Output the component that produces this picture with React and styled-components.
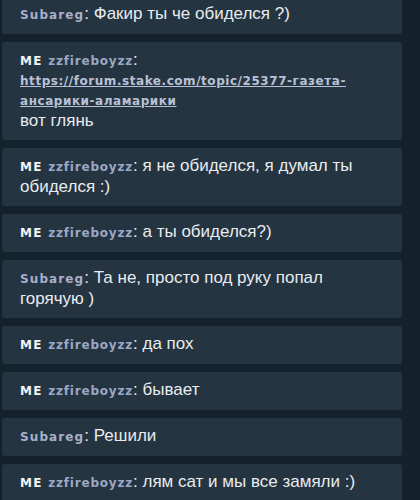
import React from 'react'
import styled, { createGlobalStyle } from 'styled-components'

const messages = [
  { id: 1, me: false, user: 'Subareg', text: 'Факир ты че обиделся ?)' },
  { id: 2, me: true, user: 'zzfireboyzz', link: 'https://forum.stake.com/topic/25377-газета-ансарики-аламарики', text: 'вот глянь' },
  { id: 3, me: true, user: 'zzfireboyzz', text: 'я не обиделся, я думал ты обиделся :)' },
  { id: 4, me: true, user: 'zzfireboyzz', text: 'а ты обиделся?)' },
  { id: 5, me: false, user: 'Subareg', text: 'Та не, просто под руку попал горячую )' },
  { id: 6, me: true, user: 'zzfireboyzz', text: 'да пох' },
  { id: 7, me: true, user: 'zzfireboyzz', text: 'бывает' },
  { id: 8, me: false, user: 'Subareg', text: 'Решили' },
  { id: 9, me: true, user: 'zzfireboyzz', text: 'лям сат и мы все замяли :)' },
]

const App = () => {
  return (
    <>
      <Global />
      <Chat>
        <List>
          {messages.map(el => (
            <Message key={el.id}>
              {el.me && <Me>ME </Me>}
              <Name $me={el.me}>{el.user}</Name>
              <Colon>:</Colon>
              {el.link ? (
                <>
                  <LinkBlock href='#'>{el.link}</LinkBlock>
                  <span>{el.text}</span>
                </>
              ) : (
                <span> {el.text}</span>
              )}
            </Message>
          ))}
        </List>
      </Chat>
    </>
  )
}

export default App

const Global = createGlobalStyle`
  html, body {
    margin: 0;
    padding: 0;
    background: #14222d;
    overflow: hidden;
  }
`

const Chat = styled.div`
  width: 420px;
  height: 500px;
  overflow: hidden;
  background: #14222d;
`

const List = styled.div`
  display: flex;
  flex-direction: column;
  gap: 8px;
  width: 400px;
  margin: -4px 0 0 2px;
`

const Message = styled.div`
  background: #243441;
  border-radius: 3px;
  padding: 8px 18px 9px;
  font-family: "Liberation Sans", Arial, sans-serif;
  font-size: 17px;
  line-height: 20px;
  color: #e9ecef;
`

const Me = styled.span`
  font-family: "DejaVu Sans", Verdana, sans-serif;
  font-weight: bold;
  font-size: 12px;
  letter-spacing: 1.3px;
  color: #f2f3f5;
`

const Name = styled.span`
  font-family: "DejaVu Sans", Verdana, sans-serif;
  font-weight: bold;
  font-size: 12px;
  letter-spacing: ${p => (p.$me ? '0.8px' : '1.1px')};
  color: ${p => (p.$me ? '#9ca8c6' : '#a9b0cb')};
`

const Colon = styled.span`
  color: #e9ecef;
`

const LinkBlock = styled.a`
  display: block;
  font-family: "DejaVu Sans", Verdana, sans-serif;
  font-weight: bold;
  font-size: 12px;
  letter-spacing: 0.55px;
  color: #b9c1d6;
  text-decoration: underline;
`
